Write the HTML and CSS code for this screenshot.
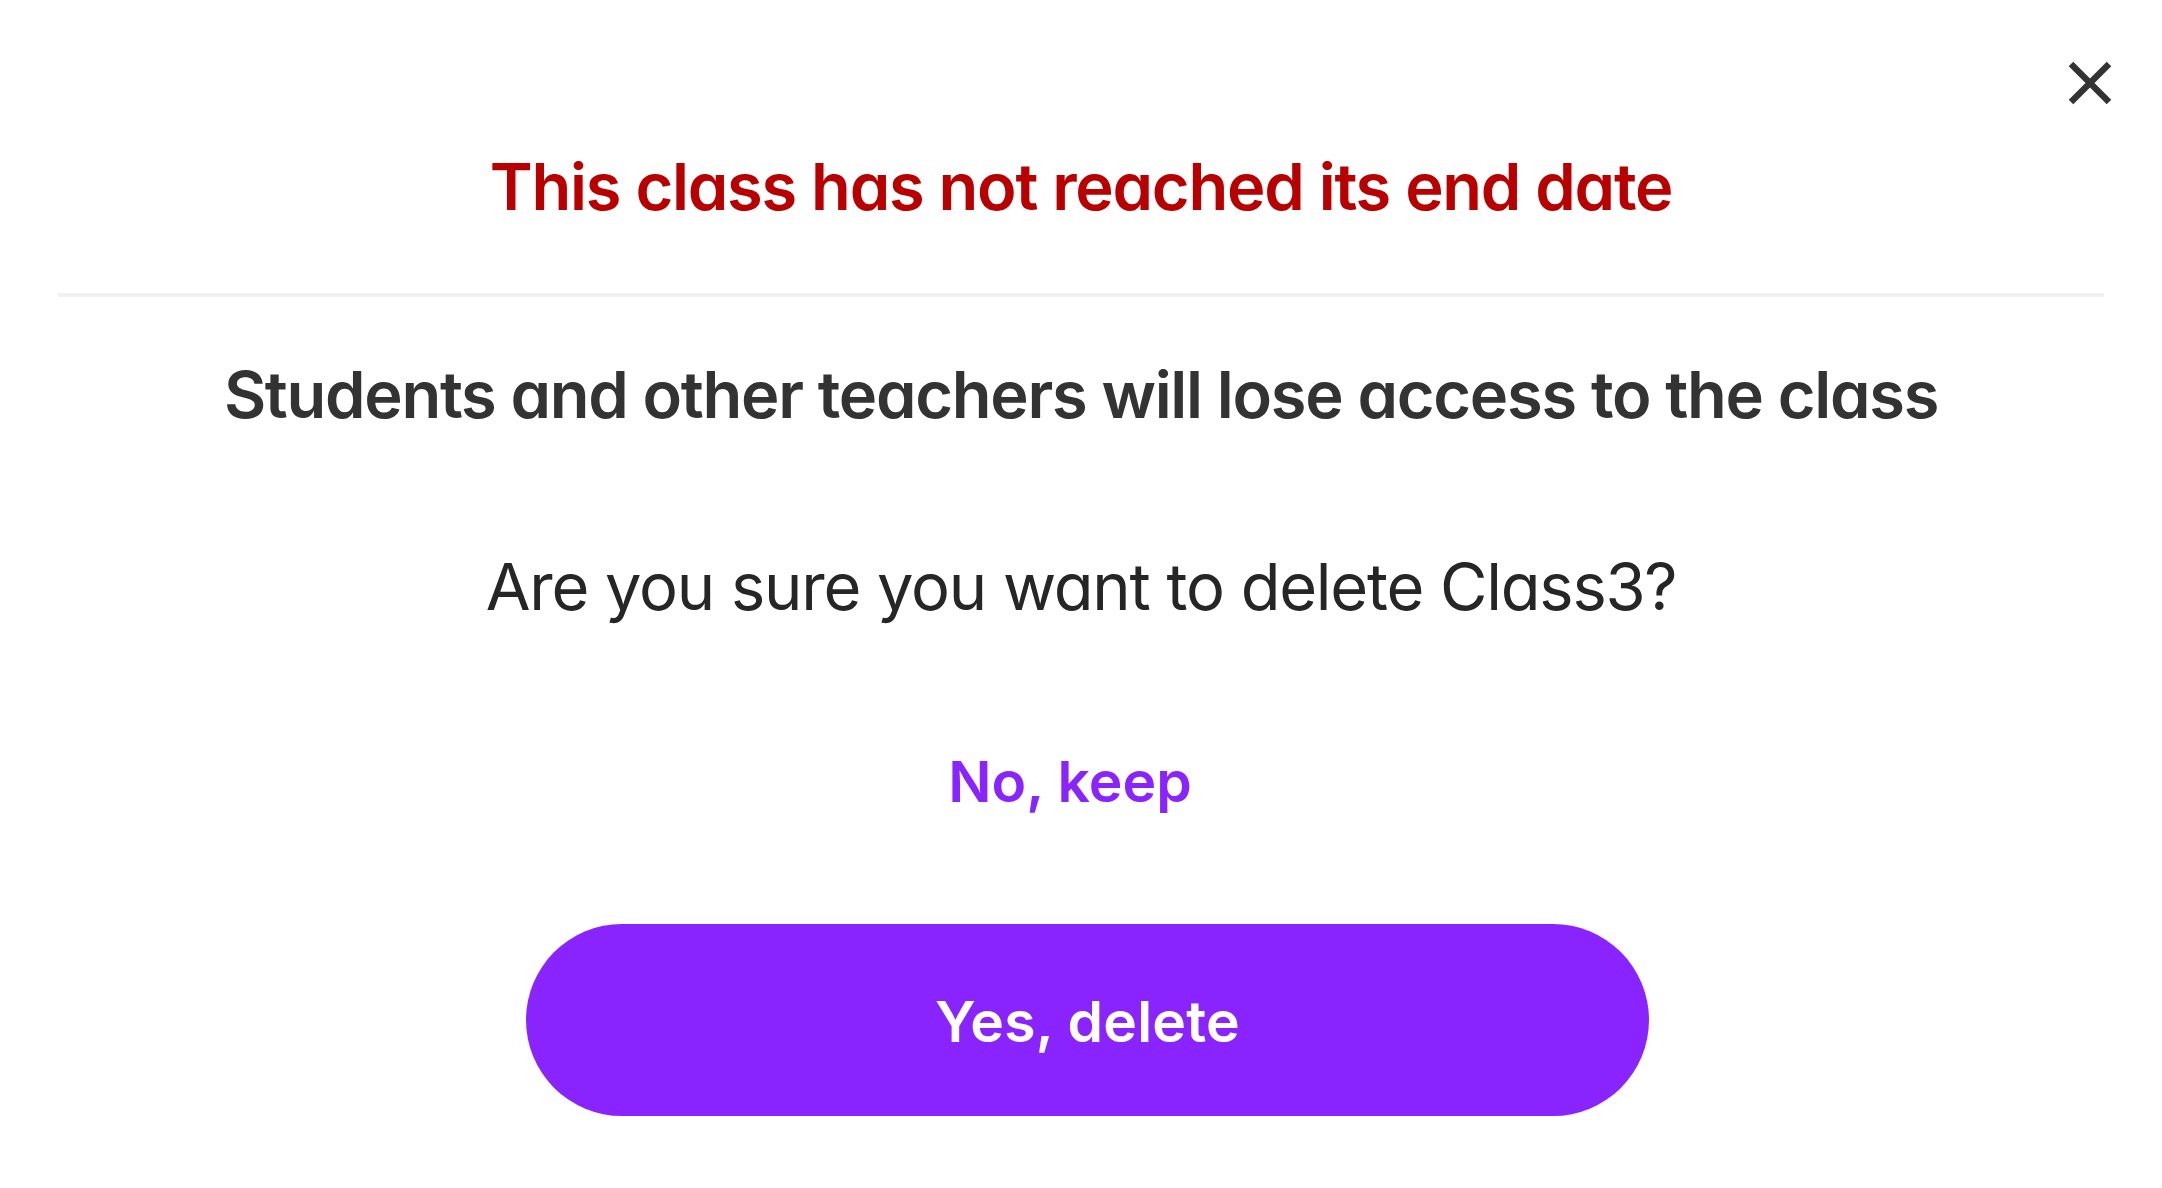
FILE: index.html
```html
<!DOCTYPE html>
<html lang="en">
<head>
<meta charset="utf-8">
<title>Delete class</title>
<link rel="stylesheet" href="styles.css">
</head>
<body>
<div class="modal" role="dialog" aria-labelledby="modal-title">
  <button class="close-btn" type="button" aria-label="Close">
    <svg width="44" height="44" viewBox="0 0 44 44" aria-hidden="true">
      <path d="M3 3 L41 41 M41 3 L3 41" stroke="#333333" stroke-width="6.4" stroke-linecap="butt" fill="none"/>
    </svg>
  </button>
  <header class="modal-header">
    <h1 id="modal-title" class="modal-title">This class has not reached its end date</h1>
  </header>
  <hr class="divider">
  <section class="modal-body">
    <p class="warning">Students and other teachers will lose access to the class</p>
    <p class="question">Are you sure you want to delete Class3?</p>
    <div class="actions">
      <button class="link-btn" type="button">No, keep</button>
      <button class="primary-btn" type="button">Yes, delete</button>
    </div>
  </section>
</div>
</body>
</html>
```
FILE: styles.css
```css
html, body {
  margin: 0;
  padding: 0;
  background: #ffffff;
}

body {
  font-family: Inter, "Noto Sans", "Liberation Sans", sans-serif;
  font-feature-settings: "cv11" 1;
  color: #222222;
}

.modal {
  position: relative;
  width: 2162px;
  height: 1188px;
  box-sizing: border-box;
  padding: 0 58px;
  display: flex;
  flex-direction: column;
  align-items: stretch;
}

.close-btn {
  position: absolute;
  top: 61px;
  right: 50px;
  width: 44px;
  height: 44px;
  padding: 0;
  border: 0;
  background: transparent;
  cursor: pointer;
  display: block;
}

.close-btn svg {
  display: block;
}

.modal-header {
  padding-top: 147px;
  padding-bottom: 66px;
  display: flex;
  justify-content: center;
}

.modal-title {
  margin: 0;
  font-size: 65px;
  line-height: 80px;
  font-weight: 600;
  letter-spacing: -1.25px;
  color: #b80000;
  text-align: center;
  white-space: nowrap;
}

.divider {
  margin: 0;
  border: 0;
  height: 4px;
  background: #f1f1f1;
}

.modal-body {
  display: flex;
  flex-direction: column;
  align-items: center;
  padding-top: 58px;
}

.warning {
  margin: 0;
  font-size: 65px;
  line-height: 80px;
  font-weight: 600;
  letter-spacing: -1.3px;
  color: #333333;
  white-space: nowrap;
}

.question {
  margin: 112px 0 0;
  font-size: 65px;
  line-height: 80px;
  font-weight: 400;
  letter-spacing: -1.25px;
  color: #262626;
  white-space: nowrap;
}

.actions {
  display: flex;
  flex-direction: column;
  align-items: center;
  margin-top: 120px;
  width: 100%;
}

.link-btn {
  margin: 0 22px 0 0;
  padding: 0;
  border: 0;
  background: transparent;
  font-family: inherit;
  font-feature-settings: "cv11" 1;
  font-size: 57px;
  line-height: 70px;
  font-weight: 600;
  letter-spacing: 0;
  color: #8a24ff;
  cursor: pointer;
}

.primary-btn {
  margin: 107px 0 0 13px;
  width: 1123px;
  height: 192px;
  box-sizing: border-box;
  padding: 4px 0 0;
  border: 0;
  border-radius: 96px;
  background: #8a24ff;
  color: #ffffff;
  font-family: inherit;
  font-feature-settings: "cv11" 1;
  font-size: 57px;
  line-height: 70px;
  font-weight: 600;
  letter-spacing: 0.2px;
  display: flex;
  align-items: center;
  justify-content: center;
  cursor: pointer;
}
```
